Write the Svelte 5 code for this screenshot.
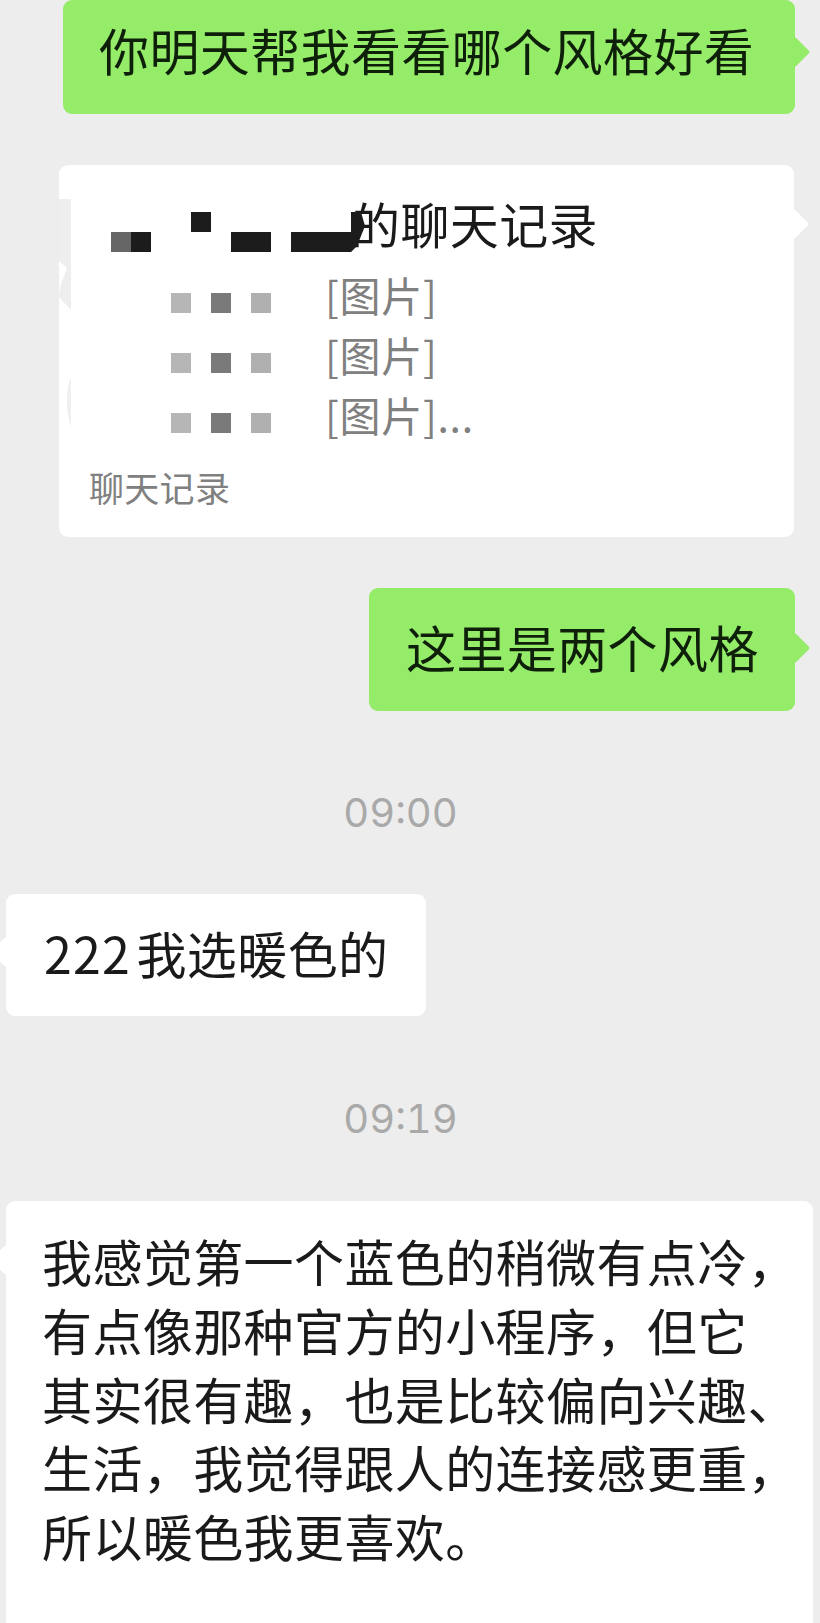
<script lang="ts">
  const previewRows = ["[图片]", "[图片]", "[图片]..."];
  const longText = [
    "我感觉第一个蓝色的稍微有点冷，",
    "有点像那种官方的小程序，但它",
    "其实很有趣，也是比较偏向兴趣、",
    "生活，我觉得跟人的连接感更重，",
    "所以暖色我更喜欢。",
  ];
</script>

<div class="chat">
  <div class="bubble out first">你明天帮我看看哪个风格好看</div>

  <div class="bubble card">
    <!-- leftover of the redaction along the left edge -->
    <svg class="smudge" width="14" height="270" viewBox="0 0 14 270">
      <path d="M0 34H12V145L0 132L1 122L8 103L0 96Z" fill="#eeeeee" />
      <path d="M12 212C7 222 6 245 12 262Z" fill="#f0f0f0" />
    </svg>
    <div class="card-title">
      <svg class="name-mosaic" width="260" height="50" viewBox="0 0 260 50">
        <rect x="0" y="20" width="20" height="20" fill="#666" />
        <rect x="20" y="20" width="20" height="20" fill="#1c1c1c" />
        <rect x="80" y="0" width="20" height="20" fill="#1c1c1c" />
        <rect x="120" y="20" width="40" height="20" fill="#1c1c1c" />
        <path d="M180 20h60v-20h10l4 14-8 20-6 6h-60z" fill="#1c1c1c" />
      </svg>
      <span>的聊天记录</span>
    </div>
    {#each previewRows as row}
      <div class="preview-row">
        <svg class="row-mosaic" width="100" height="20" viewBox="0 0 100 20">
          <rect x="0" width="20" height="20" fill="#b6b6b6" />
          <rect x="40" width="20" height="20" fill="#7a7a7a" />
          <rect x="80" width="20" height="20" fill="#b0b0b0" />
        </svg>
        <span>{row}</span>
      </div>
    {/each}
    <div class="card-foot">聊天记录</div>
  </div>

  <div class="bubble out short">这里是两个风格</div>

  <div class="time t1">09:00</div>

  <div class="bubble in pick"><span class="num">222</span> 我选暖色的</div>

  <div class="time t2">09:19</div>

  <div class="bubble in long">
    {#each longText as line}
      <div>{line}</div>
    {/each}
  </div>
</div>

<style>
  :global(body) {
    background: #ededed;
  }
  .chat {
    display: flex;
    flex-direction: column;
    height: 1623px;
    overflow: hidden;
    font-family: "Noto Sans CJK SC", "Liberation Sans", sans-serif;
    font-size: 50px;
    letter-spacing: 0.4px;
    color: #1a1a1a;
  }
  .bubble {
    position: relative;
    flex: none;
    box-sizing: border-box;
    border-radius: 9px;
    background: #fff;
  }
  .bubble.out {
    align-self: flex-end;
    margin-right: 25px;
    background: #95ec69;
    color: #0e1f0a;
  }
  .bubble.out::after,
  .card::after {
    content: "";
    position: absolute;
    right: -11px;
    width: 22px;
    height: 22px;
    border-radius: 3px;
    background: inherit;
    transform: rotate(45deg);
    clip-path: polygon(0 0, 100% 0, 100% 100%);
  }
  .bubble.in::before {
    content: "";
    position: absolute;
    left: -11px;
    width: 22px;
    height: 22px;
    border-radius: 3px;
    background: #fff;
    transform: rotate(45deg);
  }
  .first {
    width: 732px;
    height: 114px;
    padding-left: 36px;
    line-height: 99px;
    white-space: nowrap;
  }
  .first::after {
    top: 41px;
  }
  .card {
    align-self: flex-end;
    width: 735px;
    height: 372px;
    margin-top: 51px;
    margin-right: 26px;
    padding: 37px 0 0 52px;
  }
  .card::after {
    top: 48px;
  }
  .smudge {
    position: absolute;
    left: 0;
    top: 0;
  }
  .card-title {
    display: flex;
    align-items: flex-start;
    height: 62px;
    font-size: 49px;
    line-height: 42px;
  }
  .name-mosaic {
    flex: none;
    margin: 10px -20px 0 0;
    position: relative;
    z-index: 1;
  }
  .preview-row {
    display: flex;
    align-items: center;
    height: 60px;
    padding-left: 60px;
    font-size: 41px;
    letter-spacing: 0.7px;
    color: #808080;
  }
  .row-mosaic {
    flex: none;
    margin: 18px 54px 0 0;
  }
  .card-foot {
    margin: 17px 0 0 -22px;
    font-size: 35px;
    letter-spacing: 0.3px;
    color: #808080;
  }
  .short {
    width: 426px;
    height: 123px;
    margin-top: 51px;
    padding-left: 37px;
    line-height: 117px;
  }
  .short::after {
    top: 49px;
  }
  .time {
    flex: none;
    align-self: center;
    margin-right: 19px;
    font-family: Inter, "Liberation Sans", sans-serif;
    font-size: 40px;
    font-variant-numeric: tabular-nums;
    letter-spacing: 0;
    line-height: 50px;
    color: #a9a9a9;
  }
  .t1 {
    margin-top: 77px;
  }
  .pick {
    align-self: flex-start;
    width: 420px;
    height: 122px;
    margin: 56px 0 0 6px;
    padding-left: 38px;
    line-height: 116px;
    word-spacing: -6px;
  }
  .num {
    letter-spacing: 1.2px;
  }
  .pick::before {
    top: 47px;
  }
  .t2 {
    margin-top: 78px;
  }
  .long {
    align-self: flex-start;
    width: 807px;
    height: 460px;
    margin: 57px 0 0 6px;
    padding: 25px 0 0 36px;
    line-height: 68.75px;
    white-space: nowrap;
  }
  .long::before {
    top: 48px;
  }
</style>
